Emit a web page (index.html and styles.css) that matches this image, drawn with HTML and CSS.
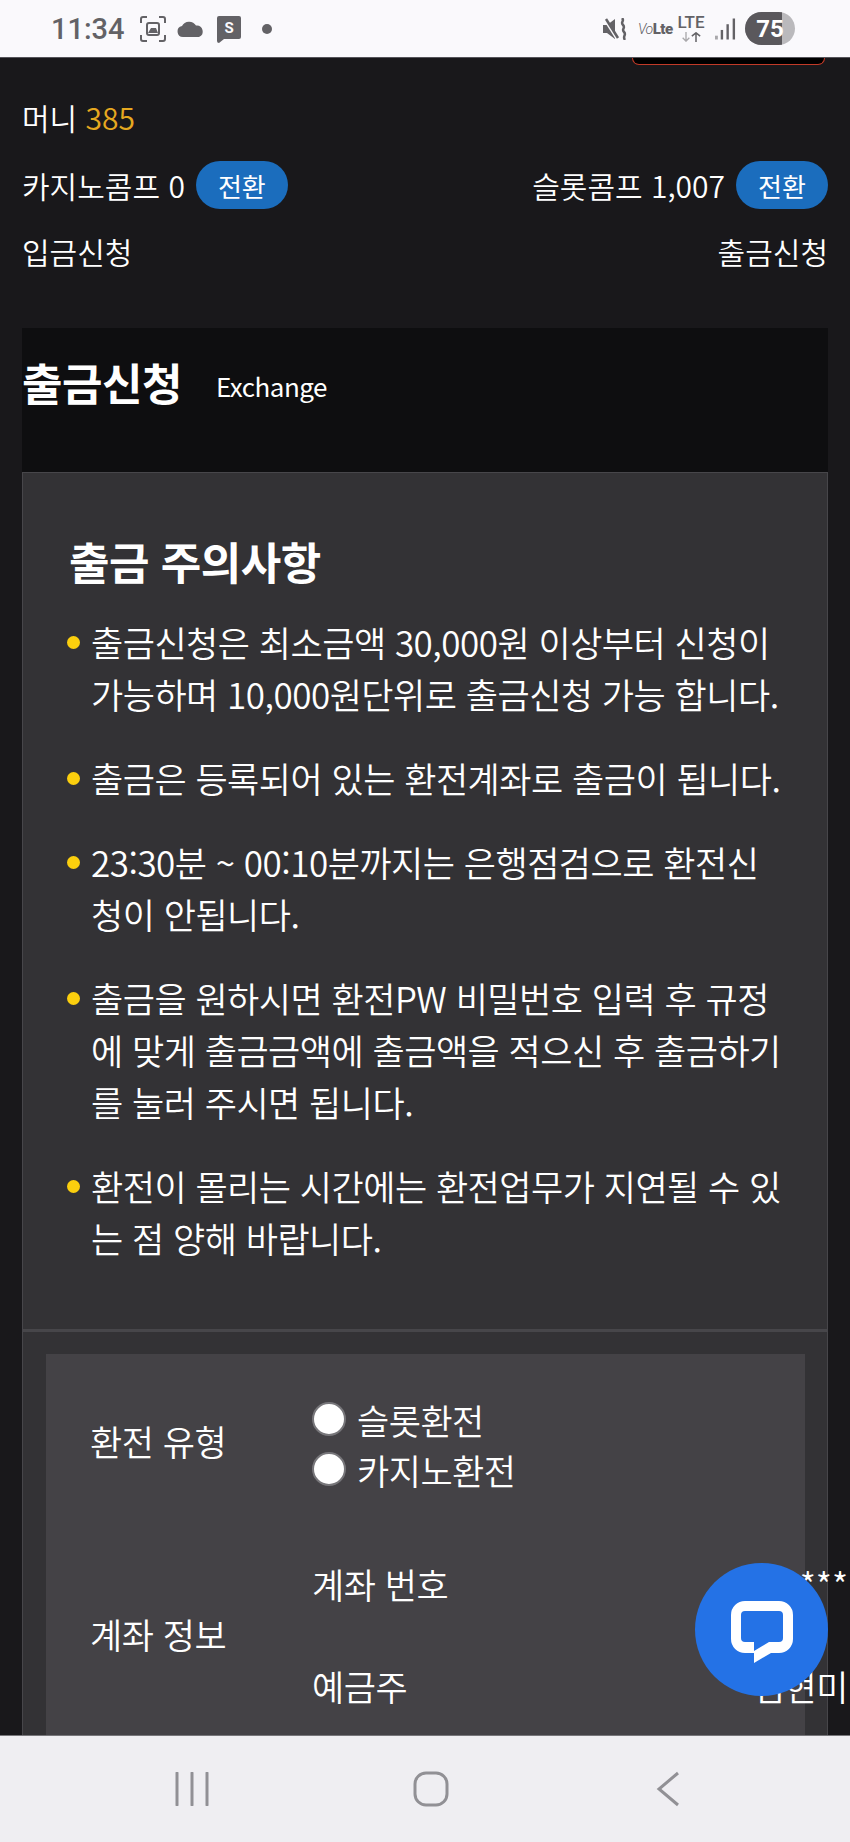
FILE: index.html
```html
<!DOCTYPE html>
<html lang="ko">
<head>
<meta charset="utf-8">
<title>출금신청</title>
<link rel="stylesheet" href="styles.css">
</head>
<body>
<div class="phone">
  <header class="status">
    <div class="status-left">
      <span class="time">11:34</span>
      <svg class="ic-shot" viewBox="0 0 28 28"><path d="M2 8V4a2 2 0 0 1 2-2h4M20 2h4a2 2 0 0 1 2 2v4M26 20v4a2 2 0 0 1-2 2h-4M8 26H4a2 2 0 0 1-2-2v-4" fill="none" stroke="#636266" stroke-width="2"/><rect x="8" y="8" width="12" height="12" rx="2" fill="none" stroke="#636266" stroke-width="2"/><path d="M9 18l3-5h5l2 5z" fill="#636266"/></svg>
      <svg class="ic-cloud" viewBox="0 0 28 16"><path d="M6 16a5.500 5.500 0 0 1-1-10.900A8 8 0 0 1 19 4.500 6 6 0 0 1 22 16z" fill="#636266"/></svg>
      <svg class="ic-s" viewBox="0 0 24 27"><path d="M2 0h20a2 2 0 0 1 2 2v19a2 2 0 0 1-2 2H7l-5 4a2 2 0 0 1-2-2V2a2 2 0 0 1 2-2z" fill="#636266"/><text x="12" y="17" class="ic-s-text">S</text></svg>
      <span class="dot"></span>
    </div>
    <div class="status-right">
      <svg class="ic-mute" viewBox="0 0 24 22"><path d="M0 7h4l8-6v20l-8-6H0z" fill="#636266"/><path d="M1 1l12 19" stroke="#faf9fc" stroke-width="2"/><path d="M3 1l12 19" stroke="#636266" stroke-width="2.500"/><path d="M19 0c3 3-2 4 1 7s-2 4 1 7-2 4 1 8" fill="none" stroke="#636266" stroke-width="2.500"/></svg>
      <span class="volte"><i>Vo</i><b>Lte</b></span>
      <span class="lte"><span class="lte-t">LTE</span><svg class="ic-arrows" viewBox="0 0 24 12"><path d="M6 0v11M2 7l4 4 4-4" fill="none" stroke="#a9a8ab" stroke-width="1.600"/><path d="M18 12V1M13 5l5-4 5 4" fill="none" stroke="#636266" stroke-width="1.800"/></svg></span>
      <svg class="ic-signal" viewBox="0 0 22 22"><rect x="0" y="18" width="3" height="4" fill="#a9a8ab"/><rect x="6" y="12" width="2.500" height="10" fill="#636266"/><rect x="12" y="6" width="2.500" height="16" fill="#636266"/><rect x="18.500" y="0" width="2.500" height="22" fill="#636266"/></svg>
      <span class="battery"><span class="battery-fill"></span><span class="battery-num">75</span></span>
    </div>
  </header>

  <main class="page">
    <div class="top-tab"></div>
    <section class="account">
      <div class="row"><span>머니 <span class="gold">385</span></span></div>
      <div class="row row-comp">
        <span class="comp"><span>카지노콤프 0</span><button class="pill">전환</button></span>
        <span class="comp"><span>슬롯콤프 1,007</span><button class="pill">전환</button></span>
      </div>
      <div class="row row-links"><span>입금신청</span><span>출금신청</span></div>
    </section>

    <section class="sheet">
      <div class="sheet-head">
        <h1>출금신청</h1><span class="en">Exchange</span>
      </div>
      <div class="panel">
        <div class="notice">
          <h2>출금 주의사항</h2>
          <ul>
            <li>출금신청은 최소금액 30,000원 이상부터 신청이 가능하며 10,000원단위로 출금신청 가능 합니다.</li>
            <li>출금은 등록되어 있는 환전계좌로 출금이 됩니다.</li>
            <li>23:30분 ~ 00:10분까지는 은행점검으로 환전신청이 안됩니다.</li>
            <li>출금을 원하시면 환전PW 비밀번호 입력 후 규정에 맞게 출금금액에 출금액을 적으신 후 출금하기를 눌러 주시면 됩니다.</li>
            <li>환전이 몰리는 시간에는 환전업무가 지연될 수 있는 점 양해 바랍니다.</li>
          </ul>
        </div>
        <div class="form-wrap">
          <div class="form">
            <div class="f-label">환전 유형</div>
            <div class="f-radios">
              <label class="radio"><span class="radio-dot"></span>슬롯환전</label>
              <label class="radio"><span class="radio-dot"></span>카지노환전</label>
            </div>
            <div class="f-label f-account">계좌 정보</div>
            <div class="f-info">
              <div class="info-row"><span>계좌 번호</span><span class="info-val stars">******</span></div>
              <div class="info-row"><span>예금주</span><span class="info-val">김현미</span></div>
            </div>
          </div>
        </div>
      </div>
    </section>
  </main>

  <button class="chat" aria-label="chat">
    <svg viewBox="0 0 62 62"><path fill-rule="evenodd" d="M14 0h34a14 14 0 0 1 14 14v24a14 14 0 0 1-14 14H40L23 62V52h-9A14 14 0 0 1 0 38V14A14 14 0 0 1 14 0zM14 10a4 4 0 0 0-4 4v23a4 4 0 0 0 4 4h9v9l15-9h10a4 4 0 0 0 4-4V14a4 4 0 0 0-4-4z" fill="#fff"/></svg>
  </button>

  <nav class="navbar">
    <svg class="nav-recent" viewBox="0 0 34 34"><path d="M2 1v32M17 1v32M32 1v32" stroke="#919095" stroke-width="3" stroke-linecap="round"/></svg>
    <svg class="nav-home" viewBox="0 0 36 36"><rect x="2" y="2" width="32" height="32" rx="11" fill="none" stroke="#919095" stroke-width="3"/></svg>
    <svg class="nav-back" viewBox="0 0 24 36"><path d="M22 2L3 18l19 16" fill="none" stroke="#919095" stroke-width="3"/></svg>
  </nav>
</div>
</body>
</html>
```
FILE: styles.css
```css
* { box-sizing: border-box; }
html, body { margin: 0; padding: 0; }
body {
  font-family: "Noto Sans CJK KR", "Noto Sans", sans-serif;
  color: #fff;
  background: #19181b;
}
.phone {
  position: relative;
  width: 850px;
  height: 1842px;
  overflow: hidden;
  display: flex;
  flex-direction: column;
}

/* status bar */
.status {
  flex: 0 0 58px;
  background: #faf9fc;
  border-bottom: 1px solid #55545a;
  padding: 0 55px 0 51px;
  display: flex;
  justify-content: space-between;
  align-items: center;
  color: #636266;
}
.status-left, .status-right { display: flex; align-items: center; }
.time { font: 500 29px Roboto, sans-serif; width: 88px; }
.ic-shot { width: 28px; height: 28px; margin-right: 10px; }
.ic-cloud { width: 28px; height: 16px; margin-right: 12px; }
.ic-s { width: 24px; height: 27px; margin-right: 21px; margin-top: 2px; }
.ic-s-text { font: 700 15px Roboto, sans-serif; fill: #faf9fc; text-anchor: middle; }
.dot { width: 10px; height: 10px; border-radius: 50%; background: #636266; }
.ic-mute { width: 24px; height: 22px; margin-right: 11px; }
.volte { display: flex; align-items: baseline; font: 700 15px Roboto, sans-serif; width: 32px; margin-right: 8px; white-space: nowrap; letter-spacing: -.5px; }
.volte i { font-weight: 300; font-size: 14px; }
.lte { display: flex; flex-direction: column; align-items: center; width: 26px; margin-right: 11px; }
.lte-t { font: 500 17px/15px Roboto, sans-serif; }
.ic-arrows { width: 20px; height: 10px; margin-top: 2px; }
.ic-signal { width: 21px; height: 22px; margin-right: 9px; }
.battery {
  position: relative;
  width: 50px;
  height: 33px;
  border-radius: 17px;
  overflow: hidden;
  background: #bab9bc;
  display: flex;
  align-items: center;
  justify-content: center;
}
.battery-fill { position: absolute; left: 0; top: 0; bottom: 0; width: 37px; background: #5a585c; }
.battery-num { position: relative; font: 700 24px Roboto, sans-serif; color: #fff; }

/* page */
.page {
  flex: 1 1 auto;
  min-height: 0;
  overflow: hidden;
  background: #19181b;
  padding: 0 22px;
}
.top-tab {
  width: 193px;
  height: 7px;
  margin: 0 3px 0 auto;
  background: #000;
  border: 1px solid #c23a28;
  border-top: 0;
  border-radius: 0 0 10px 10px;
}
.account { padding-top: 32px; font-size: 30px; line-height: 40px; font-weight: 350; }
.row { display: flex; justify-content: space-between; align-items: center; }
.gold { color: #e6a820; }
.row-comp { margin-top: 24px; height: 48px; }
.row-links { margin-top: 22px; }
.comp { display: flex; align-items: center; gap: 11px; }
.pill {
  width: 92px;
  height: 48px;
  padding: 0;
  border: 0;
  border-radius: 24px;
  background: #1b6dbd;
  color: #fff;
  font: 400 26px "Noto Sans CJK KR", sans-serif;
}

.sheet { margin-top: 57px; }
.sheet-head {
  height: 144px;
  background: #0e0e10;
  display: flex;
  align-items: flex-start;
  padding-top: 24px;
}
.sheet-head h1 { margin: 0; font-size: 44px; line-height: 60px; font-weight: 700; letter-spacing: -.5px; }
.en { margin: 16px 0 0 34px; font-size: 26px; line-height: 36px; letter-spacing: -.5px; }
.panel { background: #333235; border: 1px solid #47464a; border-bottom: 0; height: 1400px; }
.notice { padding: 58px 46px 65px 46px; border-bottom: 3px solid #47464a; }
.notice h2 { margin: 0 0 25px; font-size: 44px; line-height: 60px; font-weight: 700; letter-spacing: -.5px; }
.notice ul { margin: 0; padding: 0; list-style: none; }
.notice li {
  position: relative;
  padding-left: 22px;
  margin-bottom: 32px;
  font-size: 35px;
  line-height: 52px;
  letter-spacing: -.5px;
  font-weight: 350;
}
.notice li:last-child { margin-bottom: 0; }
.notice li::before {
  content: "";
  position: absolute;
  left: -2px;
  top: 20px;
  width: 13px;
  height: 13px;
  border-radius: 50%;
  background: #fbcf0e;
}

.form-wrap { padding: 22px 22px 0 23px; }
.form {
  background: #444246;
  padding: 40px 0 0 44px;
  display: grid;
  grid-template-columns: 222px 1fr;
  row-gap: 69px;
  height: 500px;
  align-content: start;
  font-size: 35px;
  letter-spacing: -.5px;
  font-weight: 350;
}
.f-label { align-self: center; padding-bottom: 8px; }
.f-account { padding-bottom: 4px; }
.f-radios { display: flex; flex-direction: column; }
.radio { display: flex; align-items: center; gap: 11px; height: 50px; }
.radio-dot { width: 34px; height: 34px; border-radius: 50%; background: #fff; border: 2px solid #77767a; }
.f-info { display: flex; flex-direction: column; gap: 60px; }
.info-row { display: flex; justify-content: space-between; margin-right: -43px; line-height: 42px; }
.info-val { white-space: nowrap; }
.stars { letter-spacing: 0; }

/* chat */
.chat {
  position: absolute;
  left: 695px;
  top: 1563px;
  width: 133px;
  height: 133px;
  border: 0;
  border-radius: 50%;
  background: #2472e6;
  display: flex;
  align-items: center;
  justify-content: center;
  padding: 5px 0 0;
}
.chat svg { width: 62px; height: 62px; }

/* nav bar */
.navbar {
  flex: 0 0 107px;
  background: #efeef2;
  border-top: 1px solid #77767a;
  display: flex;
  align-items: center;
}
.nav-recent { width: 34px; height: 34px; margin-left: 175px; }
.nav-home { width: 36px; height: 36px; margin-left: 204px; }
.nav-back { width: 24px; height: 36px; margin-left: 207px; }
```
